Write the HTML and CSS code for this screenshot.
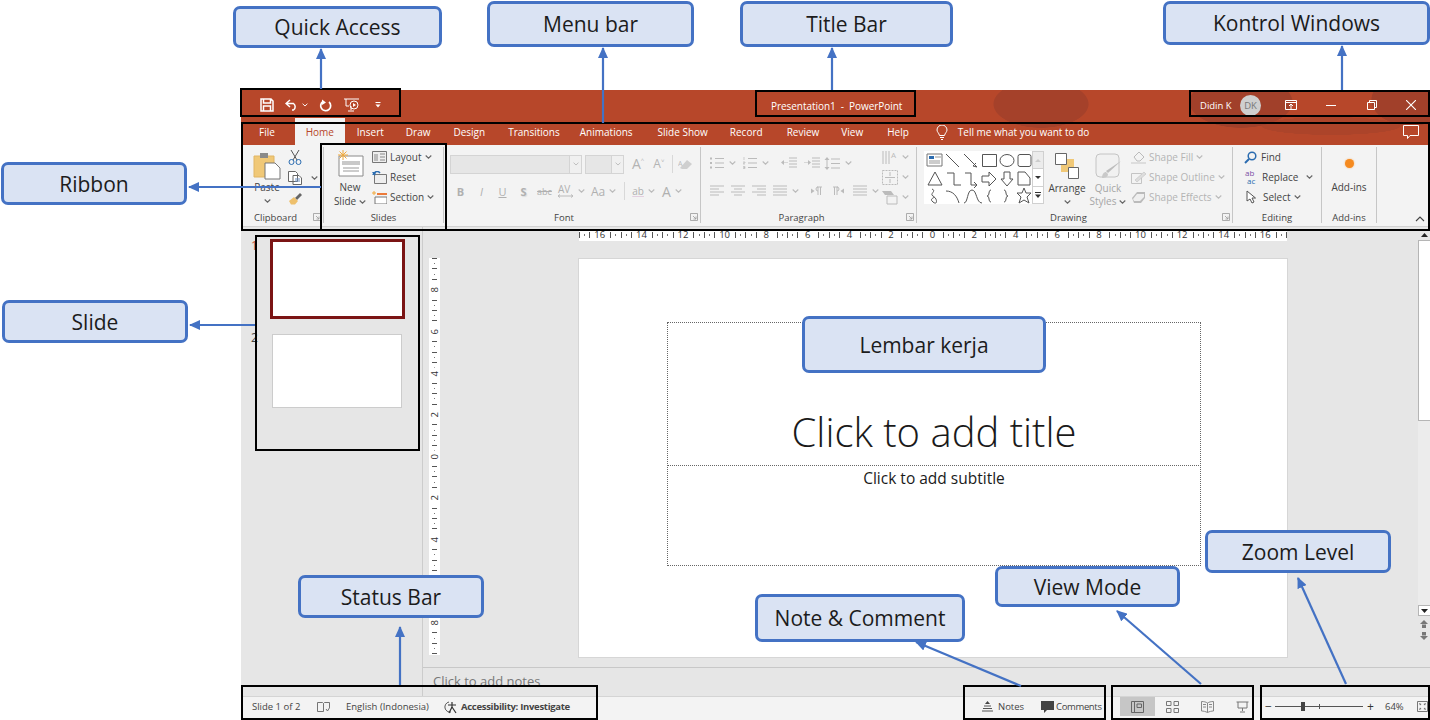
FILE: index.html
```html
<!DOCTYPE html>
<html lang="en">
<head>
    <meta charset="utf-8" />
    <title>PowerPoint interface</title>
    <link rel="stylesheet" href="styles.css">
</head>
<body>
<svg class="defs" width="0" height="0">
    <symbol id="chev" viewBox="0 0 7 4"><path d="M.7.5 3.5 3.2 6.3.5" fill="none" stroke="currentColor" stroke-width="1.1"/></symbol>
    <symbol id="launch" viewBox="0 0 8 8"><path d="M.5 7.5V.5h7v7zM3 3l3 3M6 3.5V6H3.5" fill="none" stroke="currentColor" stroke-width=".8"/></symbol>
    <symbol id="lines" viewBox="0 0 14 12"><path d="M0 1h14M0 4h9M0 7h14M0 10h9" fill="none" stroke="currentColor"/></symbol>
    <symbol id="linesc" viewBox="0 0 14 12"><path d="M0 1h14M3 4h8M0 7h14M3 10h8" fill="none" stroke="currentColor"/></symbol>
    <symbol id="linesr" viewBox="0 0 14 12"><path d="M0 1h14M5 4h9M0 7h14M5 10h9" fill="none" stroke="currentColor"/></symbol>
    <symbol id="linesj" viewBox="0 0 14 12"><path d="M0 1h14M0 4h14M0 7h14M0 10h14" fill="none" stroke="currentColor"/></symbol>
    <symbol id="bullets" viewBox="0 0 14 12"><path d="M5 1.5h9M5 6h9M5 10.500h9" fill="none" stroke="currentColor"/><path d="M0 .5h2v2H0zM0 5h2v2H0zM0 9.500h2v2H0z" fill="currentColor"/></symbol>
    <symbol id="numbers" viewBox="0 0 14 12"><path d="M5 1.5h9M5 6h9M5 10.500h9" fill="none" stroke="currentColor"/><path d="M1 0v3M0 5h2v1H0v1h2M0 9.500h2v1H.5h1.500v1H0" fill="none" stroke="currentColor" stroke-width=".7"/></symbol>
    <symbol id="indent" viewBox="0 0 16 12"><path d="M8 1h8M8 4h8M8 7h8M8 10h8" fill="none" stroke="currentColor"/><path d="M0 5.500h4V3l3 2.500L4 8V6H0z" fill="currentColor"/></symbol>
    <symbol id="outdent" viewBox="0 0 16 12"><path d="M8 1h8M8 4h8M8 7h8M8 10h8" fill="none" stroke="currentColor"/><path d="M7 5.500H3V3L0 5.500 3 8V6h4z" fill="currentColor"/></symbol>
    <symbol id="pilcrow" viewBox="0 0 12 10"><path d="M7 1v8M9.500 1v8M6 1h5M7 1a2 2 0 0 0 0 4" fill="none" stroke="currentColor"/><path d="M0 2.500 3.500 5 0 7.500z" fill="currentColor"/></symbol>
</svg>

<div class="window">
    <div class="chrome">
        <div class="titlebar">
            <div class="qat">
                <svg class="qat-save" width="14" height="14" viewBox="0 0 14 14"><path d="M1 1h10l2 2v10H1zM3.500 1v4h7V1M3.500 13V8h7v5" fill="none" stroke="#fff" stroke-width="1.500"/></svg>
                <svg class="qat-undo" width="14" height="12" viewBox="0 0 14 12"><path d="M5 1 1 4.500 5 8M1 4.500h7.500a4 4 0 0 1 0 6.500H7" fill="none" stroke="#fff" stroke-width="1.500"/></svg>
                <svg class="qat-chev chev" width="6" height="4"><use href="#chev"/></svg>
                <svg class="qat-redo" width="13" height="13" viewBox="0 0 13 13"><path d="M4 2.500a5 5 0 1 0 6 .5" fill="none" stroke="#fff" stroke-width="1.700"/><path d="M7 0v5.500l-4-3z" fill="#fff" transform="rotate(180 5 3)"/></svg>
                <svg class="qat-show" width="15" height="14" viewBox="0 0 15 14"><path d="M0 1h15M2 1v7h3M7 8v4M4 13h6" fill="none" stroke="#fff"/><circle cx="10" cy="7" r="4" fill="none" stroke="#fff"/><path d="M9 5l3 2-3 2z" fill="#fff"/></svg>
                <svg class="qat-more" width="6" height="6" viewBox="0 0 6 6"><path d="M.5 0h5v1h-5zM.5 2.500h5L3 5.500z" fill="#fff"/></svg>
            </div>
            <div class="doc-title">Presentation1&nbsp; - &nbsp;PowerPoint</div>
            <div class="win-controls">
                <span class="user-name">Didin K</span>
                <span class="avatar">DK</span>
                <svg class="wc-display" width="12" height="10" viewBox="0 0 12 10"><path d="M.5.5h11v9H.500zM.5 2.500h11M6 4v5M4 6l2-2 2 2" fill="none" stroke="#fff"/></svg>
                <svg class="wc-min" width="10" height="10" viewBox="0 0 10 10"><path d="M0 5.500h10" stroke="#fff"/></svg>
                <svg class="wc-max" width="10" height="10" viewBox="0 0 10 10"><path d="M.5 2.500h7v7h-7zM2.500 2.500v-2h7v7h-2" fill="none" stroke="#fff"/></svg>
                <svg class="wc-close" width="10" height="10" viewBox="0 0 10 10"><path d="M0 0l10 10M10 0 0 10" stroke="#fff" stroke-width="1.100"/></svg>
            </div>
        </div>
        <div class="tabs">
            <span class="tab tab-file">File</span>
            <span class="tab tab-home">Home</span>
            <span class="tab tab-insert">Insert</span>
            <span class="tab tab-draw">Draw</span>
            <span class="tab tab-design">Design</span>
            <span class="tab tab-trans">Transitions</span>
            <span class="tab tab-anim">Animations</span>
            <span class="tab tab-show">Slide Show</span>
            <span class="tab tab-record">Record</span>
            <span class="tab tab-review">Review</span>
            <span class="tab tab-view">View</span>
            <span class="tab tab-help">Help</span>
            <svg class="bulb" width="12" height="15" viewBox="0 0 12 15"><path d="M3.500 10.500C3 8 1 7 1 5a5 5 0 0 1 10 0c0 2-2 3-2.500 5.500zM4 12.500h4M5 14.500h2" fill="none" stroke="#fff"/></svg>
            <span class="tell-me">Tell me what you want to do</span>
            <svg class="comment-btn" width="16" height="15" viewBox="0 0 16 15"><path d="M.5.500h15v10H7l-2.500 3v-3h-4z" fill="none" stroke="#fff"/></svg>
        </div>
    </div>

    <div class="ribbon">
        <section class="group g-clipboard">
            <div class="group-body">
                <div class="big-btn paste-btn">
                    <svg width="28" height="28" viewBox="0 0 28 28"><path d="M1 4h20v21H1z" fill="#f0c877" stroke="#e0b565"/><path d="M7 1h8v5H7z" fill="#8a8a8a"/><path d="M12 11h10l5 5v11H12z" fill="#fff" stroke="#777"/></svg>
                    <span class="big-label">Paste</span>
                    <svg class="chev" width="7" height="4"><use href="#chev"/></svg>
                </div>
                <div class="clip-col">
                    <svg width="14" height="15" viewBox="0 0 14 15"><path d="M3 0l6 10M11 0 5 10" stroke="#555" fill="none"/><circle cx="3.500" cy="12" r="2.500" fill="none" stroke="#2b6cb0"/><circle cx="10.500" cy="12" r="2.500" fill="none" stroke="#2b6cb0"/></svg>
                    <div class="clip-copy">
                        <svg width="14" height="14" viewBox="0 0 14 14"><path d="M.5.500h7l2 2v8h-9zM5 4.500h6l2.500 2.500v6.500H5z" fill="#fff" stroke="#666"/><path d="M7 8h5M7 10h5" stroke="#6a8fc0"/></svg>
                        <svg class="chev" width="7" height="4"><use href="#chev"/></svg>
                    </div>
                    <svg width="15" height="14" viewBox="0 0 15 14"><path d="M7 7 12 2l2 2-5 5z" fill="#666"/><path d="M1 10l5-4 4 4-3 3.500H3z" fill="#eec06c"/></svg>
                </div>
            </div>
            <div class="group-label label-clip">Clipboard<svg class="launch" width="8" height="8"><use href="#launch"/></svg></div>
        </section>

        <section class="group g-slides">
            <div class="group-body">
                <div class="big-btn newslide-btn">
                    <svg width="28" height="27" viewBox="0 0 28 27"><path d="M3 6h24v20H3z" fill="#fff" stroke="#8a8a8a"/><path d="M6 11h18v4H6z" fill="#c9c9c9"/><path d="M7 18h16M7 21h16" stroke="#9a9a9a"/><path d="M7 0v10M2 5h10M3.500 1.500l7 7M10.500 1.500l-7 7" stroke="#f0a93c"/></svg>
                    <span class="big-label">New</span>
                    <span class="big-label">Slide<svg class="chev inline-chev" width="7" height="4"><use href="#chev"/></svg></span>
                </div>
                <div class="slides-col">
                    <div class="small-row">
                        <svg width="15" height="12" viewBox="0 0 15 12"><path d="M.5.500h14v11H.500z" fill="#eee" stroke="#777"/><path d="M2 3h4v7H2z" fill="#bbb"/><path d="M8 3h5M8 6h5M8 9h5" stroke="#888"/></svg>
                        <span>Layout</span><svg class="chev" width="7" height="4"><use href="#chev"/></svg>
                    </div>
                    <div class="small-row">
                        <svg width="15" height="13" viewBox="0 0 15 13"><path d="M2.500 3.500h12v9h-12z" fill="#eee" stroke="#777"/><path d="M1 4a4 4 0 0 1 7-2" fill="none" stroke="#2b6cb0" stroke-width="1.500"/><path d="M0 1l3 4 1-4z" fill="#2b6cb0"/></svg>
                        <span>Reset</span>
                    </div>
                    <div class="small-row">
                        <svg width="15" height="13" viewBox="0 0 15 13"><path d="M3 6h12v7H3z" fill="#fff" stroke="#777"/><path d="M5 2h10v2H5z" fill="#ec7a3a"/><path d="M2 0v4M0 2h4" stroke="#f0a93c"/></svg>
                        <span>Section</span><svg class="chev" width="7" height="4"><use href="#chev"/></svg>
                    </div>
                </div>
            </div>
            <div class="group-label">Slides</div>
        </section>

        <section class="group g-font">
            <div class="group-body rows">
                <div class="font-row1">
                    <span class="combo combo-name"><i><svg class="chev" width="6" height="4"><use href="#chev"/></svg></i></span>
                    <span class="combo combo-size"><i><svg class="chev" width="6" height="4"><use href="#chev"/></svg></i></span>
                    <span class="glyph grow-a">A<sup>^</sup></span>
                    <span class="glyph shrink-a">A<sup>˅</sup></span>
                    <span class="thin-sep"></span>
                    <svg class="eraser" width="15" height="14" viewBox="0 0 15 14"><path d="M2 11 9 3l5 4-5 5H4z" fill="#cfcfcf"/><text x="0" y="9" font-size="7" fill="#bbb">A</text></svg>
                </div>
                <div class="font-row2">
                    <b class="fcell">B</b><i class="fcell">I</i><u class="fcell">U</u><span class="fcell fs">S</span><s class="fcell fabc">abc</s>
                    <span class="fav">AV<svg width="15" height="4" viewBox="0 0 15 4"><path d="M0 2h15M2 .5 0 2l2 1.500M13 .5 15 2l-2 1.500" fill="none" stroke="#bbb"/></svg></span>
                    <svg class="chev" width="7" height="4"><use href="#chev"/></svg>
                    <span class="faa">Aa</span><svg class="chev" width="7" height="4"><use href="#chev"/></svg>
                    <span class="thin-sep sep2"></span>
                    <span class="fhl">ab</span><svg class="chev" width="7" height="4"><use href="#chev"/></svg>
                    <span class="fcolor">A</span><svg class="chev" width="7" height="4"><use href="#chev"/></svg>
                </div>
            </div>
            <div class="group-label label-font">Font<svg class="launch" width="8" height="8"><use href="#launch"/></svg></div>
        </section>

        <section class="group g-para">
            <div class="group-body para-body">
                <div class="para-rows">
                    <div class="para-row">
                        <svg width="14" height="12"><use href="#bullets"/></svg><svg class="chev" width="7" height="4"><use href="#chev"/></svg>
                        <svg class="p-gap1" width="14" height="12"><use href="#numbers"/></svg><svg class="chev" width="7" height="4"><use href="#chev"/></svg>
                        <svg class="p-gap2" width="16" height="12"><use href="#outdent"/></svg>
                        <svg class="p-gap3" width="16" height="12"><use href="#indent"/></svg>
                        <svg class="p-gap6" width="16" height="13" viewBox="0 0 16 13"><path d="M7 2h9M7 6.500h9M7 11h9M3 1v11" fill="none" stroke="currentColor"/><path d="M3 0 .5 3h5zM3 13 .5 10h5z" fill="currentColor"/></svg><svg class="chev" width="7" height="4"><use href="#chev"/></svg>
                    </div>
                    <div class="para-row row-align">
                        <svg width="14" height="12"><use href="#lines"/></svg>
                        <svg class="a-gap" width="14" height="12"><use href="#linesc"/></svg>
                        <svg class="a-gap" width="14" height="12"><use href="#linesr"/></svg>
                        <svg class="a-gap" width="14" height="12"><use href="#linesj"/></svg><svg class="chev" width="7" height="4"><use href="#chev"/></svg>
                        <svg class="p-gap4" width="12" height="10"><use href="#pilcrow"/></svg>
                        <svg class="p-gap5 flip" width="12" height="10"><use href="#pilcrow"/></svg>
                        <svg class="p-gap5" width="14" height="12"><use href="#linesj"/></svg><svg class="chev" width="7" height="4"><use href="#chev"/></svg>
                    </div>
                </div>
                <div class="para-col">
                    <div class="pc-item"><svg width="16" height="15" viewBox="0 0 16 15"><path d="M1 1v13M4 1v13M7 1v13" stroke="currentColor" fill="none"/><text x="9" y="8" font-size="8" fill="currentColor">A</text></svg><svg class="chev" width="7" height="4"><use href="#chev"/></svg></div>
                    <div class="pc-item"><svg width="16" height="15" viewBox="0 0 16 15"><path d="M.5.500h15v14H.500z" fill="none" stroke="currentColor" stroke-dasharray="2 1"/><path d="M3 7.500h10M8 2v4M8 9v4" stroke="currentColor"/></svg><svg class="chev" width="7" height="4"><use href="#chev"/></svg></div>
                    <div class="pc-item"><svg width="16" height="15" viewBox="0 0 16 15"><path d="M0 1h9l3 4H3z" fill="currentColor"/><path d="M5 6h10v8H5z" fill="#f3f3f3" stroke="currentColor"/></svg><svg class="chev" width="7" height="4"><use href="#chev"/></svg></div>
                </div>
            </div>
            <div class="group-label label-para">Paragraph<svg class="launch" width="8" height="8"><use href="#launch"/></svg></div>
        </section>

        <section class="group g-draw">
            <div class="group-body">
                <div class="gallery">
                    <svg width="108" height="53" viewBox="0 0 108 53" fill="none" stroke="#555">
                        <path d="M3 3h15v12H3z" stroke="#777"/><path d="M5 5h5v3H5z" fill="#2b6cb0" stroke="none"/><path d="M11 6h6M5 10h11M5 12h11" stroke="#999"/>
                        <path d="M22 3l13 13M40 3l13 13M53 16l-4-1 3-3"/>
                        <path d="M58.500 3.500h14v12h-14zM76 9.500a7 6 0 1 0 14 0 7 6 0 1 0-14 0zM96 3.500h9a2 2 0 0 1 2 2v8a2 2 0 0 1-2 2h-9a2 2 0 0 1-2-2v-8a2 2 0 0 1 2-2z"/>
                        <path d="M11 21l7 13H4zM23 22h7v12h7M41 22h6v12h6M50 31l3 3-3 3M58 25h7v-4l7 7-7 7v-4h-7zM80 21h6v7h3l-6 7-6-7h3zM94 21h7l5 6v7H94z"/>
                        <path d="M8 38c5 2-3 5 1 7s-5 2 0 6 4-4 1-5M22 40c7 0 11 5 13 12M40 52c4 0 3-13 8-13s4 13 10 13M67 39c-3 0-1 6-4 6 3 0 1 6 4 6M80 39c3 0 1 6 4 6-3 0-1 6-4 6"/>
                        <path d="M100 37l2 5h5l-4 4 2 6-5-3-5 3 2-6-4-4h5z"/>
                    </svg>
                    <div class="gallery-scroll">
                        <span class="gs-up"><svg width="6" height="3" viewBox="0 0 6 3"><path d="M3 0l3 3H0z" fill="#ccc"/></svg></span>
                        <span class="gs-down"><svg width="6" height="3" viewBox="0 0 6 3"><path d="M0 0h6L3 3z" fill="#333"/></svg></span>
                        <span class="gs-more"><svg width="6" height="6" viewBox="0 0 6 6"><path d="M0 0h6v1H0zM0 2.500h6L3 6z" fill="#333"/></svg></span>
                    </div>
                </div>
                <div class="big-btn arrange-btn">
                    <svg width="24" height="26" viewBox="0 0 24 26"><path d="M6 6h13v13H6z" fill="#f0c877"/><path d="M.5.500h11v11H.500zM13.500 14.500h10v11h-10z" fill="#fff" stroke="#666"/></svg>
                    <span class="big-label">Arrange</span>
                    <svg class="chev" width="7" height="4"><use href="#chev"/></svg>
                </div>
                <div class="big-btn quick-btn">
                    <svg width="27" height="27" viewBox="0 0 27 27"><path d="M5 1h15a4 4 0 0 1 4 4v15a4 4 0 0 1-4 4H5a4 4 0 0 1-4-4V5a4 4 0 0 1 4-4z" fill="#f1f1f1" stroke="#c4c4c4"/><path d="M26 8 13 20l-2-2z" fill="#bdbdbd"/><path d="M7 25c0-4 2-6 4-6l2 2c0 3-3 4-6 4z" fill="#c9c9c9"/></svg>
                    <span class="big-label dim">Quick</span>
                    <span class="big-label dim">Styles<svg class="chev inline-chev" width="7" height="4"><use href="#chev"/></svg></span>
                </div>
                <div class="shape-col">
                    <div class="small-row"><svg width="15" height="13" viewBox="0 0 15 13"><path d="M3 6l5-5 5 5-4 4H6z" fill="none" stroke="#bbb"/><path d="M0 11h15v2H0z" fill="#ddd"/></svg><span>Shape Fill</span><svg class="chev" width="7" height="4"><use href="#chev"/></svg></div>
                    <div class="small-row"><svg width="15" height="13" viewBox="0 0 15 13"><path d="M.5 2.500h10v10H.500z" fill="none" stroke="#c4c4c4"/><path d="M4 9l9-8 2 2-9 8z" fill="#ddd" stroke="#bbb" stroke-width=".5"/></svg><span>Shape Outline</span><svg class="chev" width="7" height="4"><use href="#chev"/></svg></div>
                    <div class="small-row"><svg width="15" height="13" viewBox="0 0 15 13"><path d="M1 7l5-6h8v6l-4 5H3z" fill="#bbb"/><path d="M2 8l4-5h7v3l-4 4H3z" fill="#efefef"/></svg><span>Shape Effects</span><svg class="chev" width="7" height="4"><use href="#chev"/></svg></div>
                </div>
            </div>
            <div class="group-label label-draw">Drawing<svg class="launch" width="8" height="8"><use href="#launch"/></svg></div>
        </section>

        <section class="group g-edit">
            <div class="group-body">
                <div class="edit-col">
                    <div class="small-row"><svg width="13" height="13" viewBox="0 0 13 13"><circle cx="8" cy="5" r="3.800" fill="none" stroke="#2b6cb0" stroke-width="1.500"/><path d="M5 8 1 12" stroke="#2b6cb0" stroke-width="2"/></svg><span>Find</span></div>
                    <div class="small-row"><svg width="14" height="16" viewBox="0 0 14 16"><text x="1" y="7" font-size="8" fill="#7b4fa6">ab</text><text x="3" y="15" font-size="8" fill="#2b6cb0">ac</text></svg><span>Replace</span><svg class="chev chev-far" width="7" height="4"><use href="#chev"/></svg></div>
                    <div class="small-row"><svg class="sel-ic" width="11" height="14" viewBox="0 0 11 14"><path d="M1 1v10l3-2 2 4 2-1-2-4h3.500z" fill="#fff" stroke="#555"/></svg><span>Select</span><svg class="chev" width="7" height="4"><use href="#chev"/></svg></div>
                </div>
            </div>
            <div class="group-label">Editing</div>
        </section>

        <section class="group g-addins">
            <div class="group-body addins-body">
                <span class="addin-dot"></span>
                <span class="big-label">Add-ins</span>
            </div>
            <div class="group-label">Add-ins</div>
        </section>

        <svg class="collapse" width="10" height="6" viewBox="0 0 10 6"><path d="M1 5l4-4 4 4" fill="none" stroke="#444" stroke-width="1.100"/></svg>
    </div>

    <div class="workspace">
        <aside class="thumbs">
            <div class="thumb-row">
                <span class="thumb-num num-active">1</span>
                <div class="thumb thumb-active"></div>
            </div>
            <div class="thumb-row row-second">
                <span class="thumb-num">2</span>
                <div class="thumb"></div>
            </div>
        </aside>
        <div class="editor">
            <div class="editor-top">
                <div class="canvas-col">
                    <div class="h-ruler">
                        <span>16</span><span>14</span><span>12</span><span>10</span><span>8</span><span>6</span><span>4</span><span>2</span><span>0</span><span>2</span><span>4</span><span>6</span><span>8</span><span>10</span><span>12</span><span>14</span><span>16</span>
                    </div>
                    <div class="canvas-row">
                        <div class="v-ruler">
                            <span>8</span><span>6</span><span>4</span><span>2</span><span>0</span><span>2</span><span>4</span><span>6</span><span>8</span>
                        </div>
                        <div class="slide">
                            <div class="ph ph-title">Click to add title</div>
                            <div class="ph ph-sub">Click to add subtitle</div>
                        </div>
                    </div>
                </div>
                <div class="vscroll">
                    <span class="vs-btn"><svg width="7" height="4" viewBox="0 0 7 4"><path d="M3.500 0 7 4H0z" fill="#222"/></svg></span>
                    <div class="vs-thumb"></div>
                    <div class="vs-track"></div>
                    <span class="vs-btn vs-down"><svg width="7" height="4" viewBox="0 0 7 4"><path d="M0 0h7L3.500 4z" fill="#222"/></svg></span>
                    <svg class="vs-page" width="8" height="8" viewBox="0 0 8 8"><path d="M4 0l4 4H0zM2 4.500h4V8H2z" fill="#777"/></svg>
                    <svg class="vs-page" width="8" height="8" viewBox="0 0 8 8"><path d="M2 0h4v3.500H2zM0 4h8L4 8z" fill="#777"/></svg>
                </div>
            </div>
            <div class="notes-row"><span>Click to add notes</span></div>
        </div>
    </div>

    <footer class="statusbar">
        <span class="st-slide">Slide 1 of 2</span>
        <svg class="st-book" width="13" height="12" viewBox="0 0 13 12"><path d="M.5 1.500h5l1 1v8h-6zM6.500 2.500l1-1h5v5M9 8l1.500 2L13 6" fill="none" stroke="#666" stroke-width=".9"/></svg>
        <span class="st-lang">English (Indonesia)</span>
        <svg class="st-acc" width="15" height="14" viewBox="0 0 15 14"><path d="M6 2a5 5 0 1 0 2 10" fill="none" stroke="#555"/><path d="M9 2v5M5 5h8M9 7l-3 6M9 7l4 6" stroke="#333" fill="none" stroke-width="1.200"/></svg>
        <b class="st-bold">Accessibility: Investigate</b>
        <svg class="st-notes" width="11" height="11" viewBox="0 0 11 11"><path d="M5.500 0 8 3H3z" fill="#444"/><path d="M2 5h7M1 7.500h9M0 10h11" stroke="#555"/></svg>
        <span class="st-notes-t">Notes</span>
        <svg class="st-comm" width="13" height="12" viewBox="0 0 13 12"><path d="M0 0h13v9H6l-3 3V9H0z" fill="#444"/></svg>
        <span class="st-comm-t">Comments</span>
        <div class="view-btns">
            <span class="vb vb-on"><svg width="13" height="12" viewBox="0 0 13 12"><path d="M.5.500h12v11H.500zM3.500.500v11M6 3h4.500v3.500H6z" fill="none" stroke="#666"/></svg></span>
            <span class="vb"><svg width="13" height="12" viewBox="0 0 13 12"><path d="M.5.500h4.500v4H.500zM8 .500h4.500v4H8zM.5 7.500h4.500v4H.500zM8 7.500h4.500v4H8z" fill="none" stroke="#777"/></svg></span>
            <span class="vb"><svg width="13" height="12" viewBox="0 0 13 12"><path d="M6.500 2C5 1 3 .500.500.500v9.500c2 0 4 .5 6 1.500 2-1 4-1.500 6-1.500V.500C10 .5 8 1 6.500 2zm0 0v9.500M2 3.500h3M2 6h3M8 3.500h3M8 6h3" fill="none" stroke="#888"/></svg></span>
            <span class="vb"><svg width="13" height="12" viewBox="0 0 13 12"><path d="M.5 1h12M2 1v6h9V1M6.500 7v3M4 11h5" fill="none" stroke="#777"/></svg></span>
        </div>
        <div class="zoom-ctl">
            <span class="z-sign">−</span>
            <div class="z-track"><i class="z-mid"></i><i class="z-knob"></i></div>
            <span class="z-sign">+</span>
            <span class="z-pct">64%</span>
            <svg class="z-fit" width="11" height="11" viewBox="0 0 11 11"><path d="M.5.500h10v10H.500z" fill="none" stroke="#777"/><path d="M2 2l2.500 1L3 4.500zM9 2 6.500 3 8 4.500zM2 9l2.500-1L3 6.500zM9 9 6.500 8 8 6.500z" fill="#666"/></svg>
        </div>
    </footer>
</div>

<!-- labels and pointers drawn over the window -->
<div class="outline o-qat"></div>
<div class="outline o-title"></div>
<div class="outline o-win"></div>
<div class="outline o-ribbon"></div>
<div class="outline o-slides"></div>
<div class="outline o-thumbs"></div>
<div class="outline o-status"></div>
<div class="outline o-notes"></div>
<div class="outline o-view"></div>
<div class="outline o-zoom"></div>

<svg class="arrows" width="1430" height="720" viewBox="0 0 1430 720">
    <defs>
        <marker id="head" markerWidth="11" markerHeight="10" refX="10" refY="5" orient="auto" markerUnits="userSpaceOnUse"><path d="M0 0 11 5 0 10z" fill="#4472c4"/></marker>
    </defs>
    <g stroke="#4472c4" stroke-width="2.200" fill="none">
        <path d="M321 89V49" marker-end="url(#head)"/>
        <path d="M603 123V48" marker-end="url(#head)"/>
        <path d="M832 90V48" marker-end="url(#head)"/>
        <path d="M1342 90V46" marker-end="url(#head)"/>
        <path d="M321 187H189" marker-end="url(#head)"/>
        <path d="M255 325H190" marker-end="url(#head)"/>
        <path d="M400 685V627" marker-end="url(#head)"/>
        <path d="M1021 686 916 642" marker-end="url(#head)"/>
        <path d="M1201 684 1117 611" marker-end="url(#head)"/>
        <path d="M1346 684 1298 578" marker-end="url(#head)"/>
    </g>
</svg>

<div class="callout c-quick">Quick Access</div>
<div class="callout c-menu">Menu bar</div>
<div class="callout c-title">Title Bar</div>
<div class="callout c-win">Kontrol Windows</div>
<div class="callout c-ribbon">Ribbon</div>
<div class="callout c-slide">Slide</div>
<div class="callout c-sheet">Lembar kerja</div>
<div class="callout c-status">Status Bar</div>
<div class="callout c-note">Note &amp; Comment</div>
<div class="callout c-view">View Mode</div>
<div class="callout c-zoom">Zoom Level</div>
</body>
</html>
```
FILE: styles.css
```css
* {
    box-sizing: border-box;
}

html, body {
    margin: 0;
    padding: 0;
    height: 720px;
    overflow: hidden;
}

body {
    position: relative;
    width: 1430px;
    background-color: #ffffff;
    font: 10px "Open Sans", sans-serif;
    color: #444444;
}

svg {
    flex: none;
    display: block;
}

.defs {
    position: absolute;
}

.chev {
    color: #666666;
}

/* window */
.window {
    margin: 90px 0 0 241px;
    width: 1189px;
    height: 630px;
    display: flex;
    flex-direction: column;
}

.chrome {
    background-color: #b7472a;
    background-image:
        radial-gradient(ellipse 48px 24px at 800px 14px, #a5412a 98%, transparent),
        radial-gradient(ellipse 52px 26px at 1000px 12px, #a1402a 98%, transparent),
        radial-gradient(ellipse 40px 26px at 1170px 10px, #a1402a 98%, transparent),
        radial-gradient(ellipse 70px 9px at 1090px 36px, #ac442a 98%, transparent);
    color: #ffffff;
}

.titlebar {
    height: 32px;
    display: flex;
    align-items: center;
}

.qat {
    width: 530px;
    display: flex;
    align-items: center;
    padding: 0 0 2px 19px;
}

.qat-undo { margin-left: 11px; }
.qat-chev { margin-left: 3px; color: #ffffff; }
.qat-redo { margin-left: 11px; }
.qat-show { margin-left: 12px; }
.qat-more { margin-left: 16px; }

.doc-title {
    width: 419px;
    white-space: nowrap;
    font-size: 10px;
    letter-spacing: -.05px;
}

.win-controls {
    display: flex;
    align-items: center;
    flex: 1;
    padding: 0 0 2px 10px;
}

.avatar {
    width: 21px;
    height: 21px;
    margin-left: 7px;
    border-radius: 50%;
    background-color: #cfcfcf;
    color: #777777;
    display: flex;
    align-items: center;
    justify-content: center;
    font-size: 9.500px;
}

.user-name { width: 33px; white-space: nowrap; font-size: 9.500px; }
.wc-display { margin-left: 24px; }
.wc-min { margin-left: 29px; }
.wc-max { margin-left: 31px; }
.wc-close { margin-left: 29px; }

.tabs {
    height: 23px;
    display: flex;
    align-items: center;
    padding: 0 0 3px 18px;
    font-size: 10px;
    white-space: nowrap;
}

.tab { flex: none; }
.tab-home {
    width: 50px;
    height: 27px;
    margin: 0 0 -3px 20px;
    align-self: flex-end;
    padding-top: 7px;
    text-align: center;
    background-color: #f3f3f3;
    color: #b7472a;
}
.tab-insert { margin-left: 12px; }
.tab-draw { margin-left: 22px; }
.tab-design { margin-left: 23px; }
.tab-trans { margin-left: 23px; }
.tab-anim { margin-left: 20px; }
.tab-show { margin-left: 25px; }
.tab-record { margin-left: 22px; }
.tab-review { margin-left: 24px; }
.tab-view { margin-left: 22px; }
.tab-help { margin-left: 24px; }
.bulb { margin-left: 27px; }
.tell-me { margin-left: 10px; }
.comment-btn { margin-left: auto; margin-right: 11px; }

/* ribbon */
.ribbon {
    position: relative;
    height: 82px;
    display: flex;
    background-color: #f3f3f3;
    border-bottom: 1px solid #d2d2d2;
    padding-top: 2px;
}

.group {
    flex: none;
    height: 76px;
    border-right: 1px solid #c6c6c6;
    display: flex;
    flex-direction: column;
}

.group-body {
    flex: 1;
    display: flex;
    min-height: 0;
}

.group-label {
    position: relative;
    height: 14px;
    line-height: 17px;
    text-align: center;
    color: #444444;
    font-size: 9.500px;
}

.launch {
    position: absolute;
    right: 2px;
    top: 4px;
    color: #999999;
}

.big-btn {
    display: flex;
    flex-direction: column;
    align-items: center;
    flex: none;
}

.big-label {
    height: 13px;
    line-height: 13px;
    white-space: nowrap;
    display: flex;
    align-items: center;
}

.big-label.dim { color: #a6a6a6; }
.inline-chev { margin-left: 3px; }

.small-row {
    height: 20px;
    display: flex;
    align-items: center;
    white-space: nowrap;
}

.small-row span { margin-left: 3px; }
.small-row .chev { margin-left: 3px; }

.g-clipboard { width: 83px; }
.paste-btn { width: 28px; margin: 5px 0 0 12px; }
.paste-btn .big-label { margin-top: 1px; }
.paste-btn .chev { margin-top: 5px; }

.label-clip { text-align: left; padding-left: 13px; }

.clip-col {
    margin: 0 0 0 7px;
    display: flex;
    flex-direction: column;
    gap: 6px;
    padding-top: 3px;
}

.clip-copy { display: flex; align-items: center; gap: 9px; }

.g-slides { width: 120px; }
.newslide-btn { width: 28px; margin: 3px 0 0 12px; }
.newslide-btn .big-label { margin-top: 1px; }
.newslide-btn .big-label:nth-of-type(1) { margin-top: 4px; }
.slides-col { margin-left: 8px; }

.g-font { width: 257px; }
.label-font { padding-right: 16px; }
.rows { flex-direction: column; padding: 7px 0 0 6px; }

.font-row1 { display: flex; align-items: center; height: 20px; }

.combo {
    height: 19px;
    background-color: #e6e6e6;
    border: 1px solid #d4d4d4;
    display: flex;
    justify-content: flex-end;
}

.combo i {
    width: 12px;
    background-color: #f0f0f0;
    border-left: 1px solid #d4d4d4;
    display: flex;
    align-items: center;
    justify-content: center;
}

.combo .chev { color: #bbbbbb; }
.combo-name { width: 132px; }
.combo-size { width: 39px; margin-left: 3px; }

.glyph {
    color: #b4b4b4;
    font-size: 13px;
    line-height: 1;
    display: flex;
}

.glyph sup { font-size: 6px; line-height: 1; }
.grow-a { margin-left: 8px; font-size: 14px; }
.shrink-a { margin-left: 9px; font-size: 12px; }

.thin-sep {
    width: 1px;
    height: 18px;
    background-color: #d8d8d8;
    margin-left: 8px;
}

.eraser { margin-left: 5px; }

.font-row2 {
    margin-top: 7px;
    height: 20px;
    display: flex;
    align-items: center;
    color: #b0b0b0;
}

.font-row2 .chev { color: #bbbbbb; margin-left: 4px; }
.fcell { width: 21px; text-align: center; font-size: 11px; flex: none; }
.fs { font-weight: bold; text-shadow: 1px 1px 1px #dddddd; }
.fabc { font-size: 9px; }
.fav { font-size: 10px; line-height: 10px; margin-left: 3px; width: 16px; }
.faa { margin-left: 6px; font-size: 12px; }
.sep2 { margin-left: 8px; }
.fhl { margin-left: 7px; font-size: 10px; text-decoration: underline; text-decoration-color: #e3cfe0; }
.fcolor { margin-left: 7px; font-size: 14px; }

.g-para { width: 216px; color: #b4b4b4; }
.label-para { padding-right: 14px; }
.para-body { padding: 6px 0 0 9px; color: #bbbbbb; }
.para-rows { width: 170px; }
.para-row { height: 20px; display: flex; align-items: center; }
.para-row .chev { color: #bbbbbb; margin-left: 5px; }
.row-align { margin-top: 8px; }
.p-gap1 { margin-left: 7px; }
.p-gap2 { margin-left: 12px; }
.p-gap3 { margin-left: 7px; }
.p-gap4 { margin-left: 12px; }
.p-gap5 { margin-left: 9px; }
.p-gap6 { margin-left: 4px; }
.a-gap { margin-left: 7px; }
.flip { transform: scaleX(-1); }
.para-col { margin-left: 2px; margin-top: -6px; }
.pc-item { height: 20px; display: flex; align-items: center; gap: 4px; }
.pc-item .chev { color: #bbbbbb; }

.g-draw { width: 316px; }
.gallery {
    margin: 4px 0 0 7px;
    width: 120px;
    height: 53px;
    display: flex;
    background-color: #ffffff;
    flex: none;
}

.gallery-scroll {
    width: 12px;
    display: flex;
    flex-direction: column;
    border: 1px solid #d0d0d0;
}

.gallery-scroll span {
    flex: 1;
    display: flex;
    align-items: center;
    justify-content: center;
    border-top: 1px solid #d0d0d0;
    background-color: #ffffff;
}

.gallery-scroll .gs-up { background-color: #ececec; border-top: 0; }

.arrange-btn { width: 40px; margin: 6px 0 0 3px; }
.arrange-btn .big-label { margin-top: 3px; color: #444444; }
.arrange-btn .chev { margin-top: 5px; }
.quick-btn { width: 40px; margin: 6px 0 0 1px; }
.quick-btn .big-label:nth-of-type(1) { margin-top: 2px; }
.shape-col { margin-left: 3px; color: #b4b4b4; }
.shape-col .chev { color: #bbbbbb; }
.label-draw { text-align: left; padding-left: 133px; }

.g-edit { width: 89px; }
.edit-col { margin-left: 11px; }
.edit-col .small-row span { margin-left: 4px; }
.chev-far { margin-left: 8px !important; }
.sel-ic { margin: 0 2px 0 2px; }

.g-addins { width: 55px; }
.addins-body {
    flex-direction: column;
    align-items: center;
    padding: 12px 0 0 0;
    gap: 13px;
}

.addin-dot {
    width: 9px;
    height: 9px;
    border-radius: 50%;
    background-color: #f58a1f;
    box-shadow: 0 0 2px #f9b36a;
}

.collapse {
    position: absolute;
    right: 5px;
    bottom: 4px;
}

/* workspace */
.workspace {
    height: 469px;
    display: flex;
    background-color: #e6e6e6;
}

.thumbs {
    width: 182px;
    border-right: 1px solid #cccccc;
    padding-top: 12px;
    flex: none;
}

.thumb-row {
    display: flex;
    align-items: flex-start;
    height: 95px;
    padding-left: 10px;
}

.thumb-num {
    width: 19px;
    font-size: 12px;
    line-height: 12px;
    color: #444444;
}

.num-active { color: #c9573a; padding-top: 1px; }
.row-second .thumb-num { margin-top: -2px; }

.thumb {
    width: 130px;
    height: 74px;
    background-color: #ffffff;
    border: 1px solid #cccccc;
    margin: 0 0 0 2px;
}

.thumb-active {
    width: 135px;
    height: 80px;
    margin: 0;
    border: 3px solid #7b1414;
}

.editor {
    flex: 1;
    display: flex;
    flex-direction: column;
}

.editor-top {
    height: 440px;
    display: flex;
}

.canvas-col {
    flex: 1;
    display: flex;
    flex-direction: column;
    padding-top: 2px;
}

.h-ruler {
    margin-left: 156px;
    width: 708px;
    height: 12px;
    display: flex;
    background:
        repeating-linear-gradient(to right, #555555 0 1px, transparent 1px 10.400px) 0 3px / 100% 6px no-repeat,
        repeating-linear-gradient(to right, #777777 0 1px, transparent 1px 5.200px) 0 5px / 100% 2px no-repeat,
        #ffffff;
}

.h-ruler span {
    width: 41.600px;
    flex: none;
    text-align: center;
    font-size: 9.500px;
    line-height: 12px;
    color: #333333;
    background: linear-gradient(#ffffff, #ffffff) center / 14px 100% no-repeat;
}

.canvas-row {
    display: flex;
    margin-top: 17px;
    padding-left: 6px;
}

.v-ruler {
    width: 11px;
    height: 397px;
    display: flex;
    flex-direction: column;
    justify-content: center;
    background:
        repeating-linear-gradient(to bottom, #555555 0 1px, transparent 1px 10.400px) 3px 0 / 5px 100% no-repeat,
        repeating-linear-gradient(to bottom, #777777 0 1px, transparent 1px 5.200px) 5px 0 / 1px 100% no-repeat,
        #ffffff;
}

.v-ruler span {
    height: 41.600px;
    flex: none;
    writing-mode: vertical-rl;
    transform: rotate(180deg);
    text-align: center;
    font-size: 9.500px;
    line-height: 11px;
    color: #333333;
    background: linear-gradient(#ffffff, #ffffff) center / 100% 12px no-repeat;
}

.slide {
    margin-left: 138px;
    width: 710px;
    height: 400px;
    background-color: #ffffff;
    border: 1px solid #d6d6d6;
    padding: 63px 0 0 88px;
    color: #1a1a1a;
}

.ph {
    width: 534px;
    border: 1px dotted #666666;
    text-align: center;
}

.ph-title {
    height: 144px;
    display: flex;
    align-items: flex-end;
    justify-content: center;
    font: 300 40px/1 "Open Sans", sans-serif;
    padding-bottom: 13px;
}

.ph-sub {
    height: 101px;
    margin-top: -1px;
    font-size: 15.500px;
    line-height: 20px;
    padding-top: 2px;
}

.vscroll {
    width: 12px;
    flex: none;
    display: flex;
    flex-direction: column;
    align-items: center;
    padding-top: 2px;
}

.vs-btn {
    width: 12px;
    height: 11px;
    display: flex;
    align-items: center;
    justify-content: center;
    flex: none;
}

.vs-thumb {
    width: 12px;
    height: 181px;
    background-color: #ffffff;
    border: 1px solid #b5b5b5;
    border-right: 0;
    flex: none;
}

.vs-track {
    width: 12px;
    height: 184px;
    background-color: #ececec;
    flex: none;
}

.vs-down {
    background-color: #ffffff;
    border: 1px solid #b5b5b5;
    border-right: 0;
}

.vs-page { margin-top: 4px; }

.notes-row {
    height: 18px;
    margin-top: 0;
    border-top: 1px solid #c8c8c8;
    padding-left: 10px;
    overflow: hidden;
    font-size: 13px;
    line-height: 26px;
    color: #777777;
}

/* status bar */
.statusbar {
    height: 24px;
    background-color: #f3f3f3;
    border-top: 1px solid #d4d4d4;
    display: flex;
    align-items: center;
    padding-bottom: 4px;
    font-size: 9.500px;
    white-space: nowrap;
    color: #444444;
}

.st-slide { margin-left: 11px; width: 52px; flex: none; }
.st-book { margin-left: 13px; }
.st-lang { margin-left: 16px; width: 84px; flex: none; }
.st-acc { margin-left: 13px; }
.st-bold { margin-left: 3px; width: 111px; flex: none; font-size: 9.500px; letter-spacing: -.3px; }
.st-notes { margin-left: 410px; }
.st-notes-t { margin-left: 5px; width: 28px; flex: none; }
.st-comm { margin-left: 15px; }
.st-comm-t { margin-left: 2px; width: 49px; flex: none; letter-spacing: -.35px; }

.view-btns {
    margin-left: 15px;
    height: 22px;
    display: flex;
    align-items: center;
    flex: none;
}

.vb {
    width: 35px;
    height: 19px;
    display: flex;
    align-items: center;
    justify-content: center;
}

.vb-on { background-color: #c6c6c6; }

.zoom-ctl {
    margin-left: 4px;
    display: flex;
    align-items: center;
    flex: none;
}

.z-sign { width: 9px; text-align: center; font-size: 12px; color: #333333; }

.z-track {
    position: relative;
    width: 88px;
    height: 1px;
    margin: 0 3px 0 2px;
    background-color: #555555;
}

.z-mid {
    position: absolute;
    left: 44px;
    top: -2px;
    width: 1px;
    height: 5px;
    background-color: #555555;
}

.z-knob {
    position: absolute;
    left: 26px;
    top: -4px;
    width: 4px;
    height: 9px;
    background-color: #444444;
}

.z-pct { margin-left: 10px; width: 20px; flex: none; }
.z-fit { margin-left: 12px; }

/* callouts and pointers */
.outline {
    position: absolute;
    border: 2px solid #000000;
    pointer-events: none;
}

.o-qat { left: 240px; top: 88px; width: 161px; height: 29px; }
.o-title { left: 755px; top: 90px; width: 161px; height: 27px; }
.o-win { left: 1189px; top: 90px; width: 241px; height: 27px; }
.o-ribbon { left: 241px; top: 122px; width: 1189px; height: 109px; }
.o-slides { left: 320px; top: 143px; width: 127px; height: 88px; }
.o-thumbs { left: 255px; top: 235px; width: 165px; height: 216px; }
.o-status { left: 241px; top: 685px; width: 357px; height: 35px; }
.o-notes { left: 963px; top: 685px; width: 143px; height: 35px; }
.o-view { left: 1111px; top: 685px; width: 143px; height: 35px; }
.o-zoom { left: 1260px; top: 685px; width: 170px; height: 35px; }

.arrows {
    position: absolute;
    left: 0;
    top: 0;
}

.callout {
    position: absolute;
    display: flex;
    align-items: center;
    justify-content: center;
    background-color: #dae3f3;
    border: 3.500px solid #4472c4;
    border-radius: 7px;
    font-size: 21px;
    color: #1c1c1c;
    white-space: nowrap;
}

.c-quick { left: 233px; top: 6px; width: 209px; height: 42px; }
.c-menu { left: 487px; top: 1px; width: 207px; height: 46px; }
.c-title { left: 740px; top: 1px; width: 213px; height: 46px; }
.c-win { left: 1163px; top: 1px; width: 267px; height: 44px; }
.c-ribbon { left: 1px; top: 162px; width: 186px; height: 43px; }
.c-slide { left: 2px; top: 300px; width: 186px; height: 43px; }
.c-sheet { left: 802px; top: 316px; width: 244px; height: 57px; }
.c-status { left: 298px; top: 575px; width: 186px; height: 43px; }
.c-note { left: 755px; top: 594px; width: 210px; height: 48px; }
.c-view { left: 995px; top: 566px; width: 185px; height: 41px; }
.c-zoom { left: 1205px; top: 530px; width: 186px; height: 43px; }
```
